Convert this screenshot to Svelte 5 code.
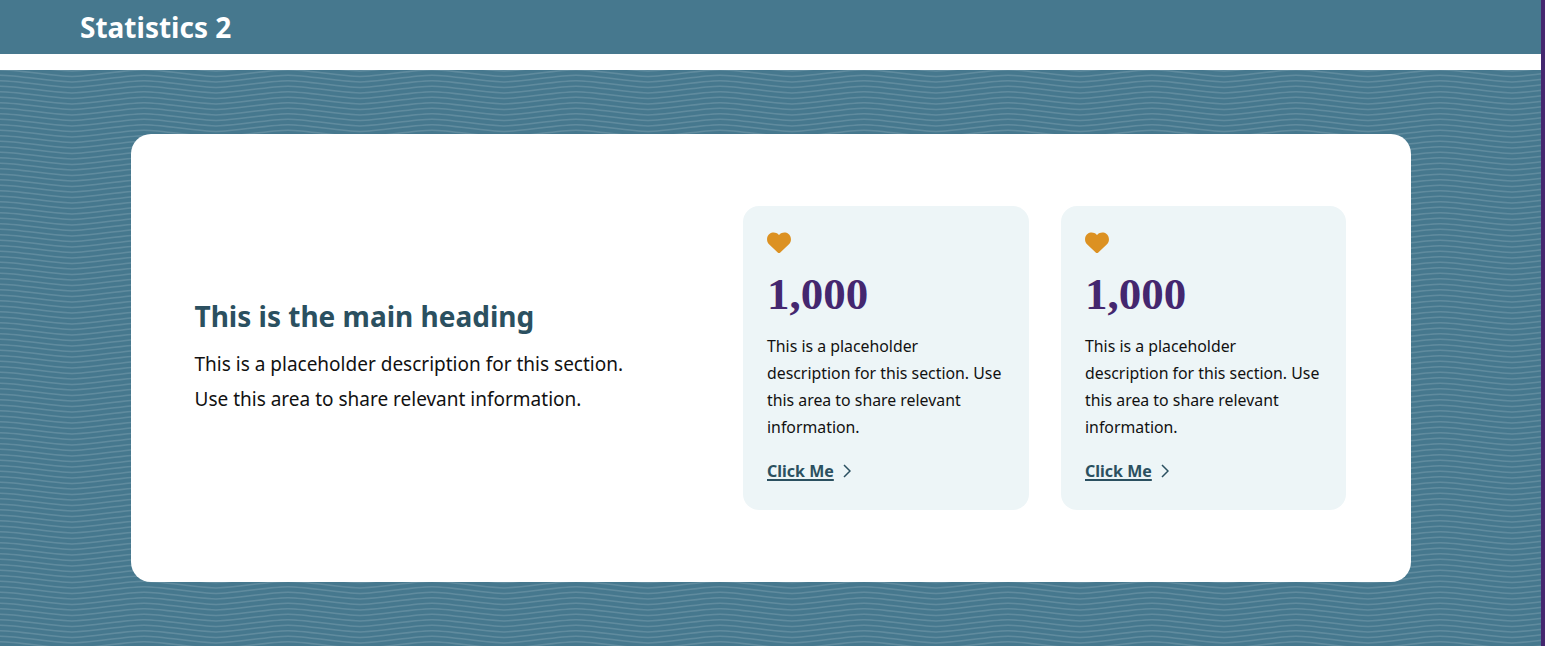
<script>
  const cards = [1, 2];
</script>

<div class="page">
  <header class="topbar"><h1>Statistics 2</h1></header>
  <section class="band">
    <div class="panel">
      <div class="intro">
        <h2>This is the main heading</h2>
        <p>This is a placeholder description for this section. Use this area to share relevant information.</p>
      </div>
      <div class="cards">
        {#each cards as card}
          <article class="card">
            <svg class="heart" viewBox="0 32 512 450" aria-hidden="true">
              <path d="M47.600 300.400L228.300 469.900c7.500 7 17.400 10.900 27.700 10.900s20.200-3.900 27.700-10.900L464.400 300.400c30.400-28.300 47.600-68 47.600-109.500v-5.800c0-69.900-50.500-129.500-119.400-141C347 36.500 300.600 51.400 268 84L256 96 244 84c-32.600-32.600-79-47.500-124.600-39.900C50.500 55.600 0 115.200 0 185.100v5.800c0 41.500 17.200 81.200 47.600 109.500z" />
            </svg>
            <div class="num">1,000</div>
            <p>This is a placeholder description for this section. Use this area to share relevant information.</p>
            <a href="#top" class="link">
              <span>Click Me</span>
              <svg class="chev" viewBox="0 0 8 14" aria-hidden="true"><path d="M1 1l6 6-6 6" /></svg>
            </a>
          </article>
        {/each}
      </div>
    </div>
  </section>
</div>

<style>
  :global(body) {
    margin: 0;
    background: #fff;
    overflow: hidden;
  }
  .page {
    height: 646px;
    border-right: 4px solid #44276f;
    font-family: "Noto Sans", "Open Sans", sans-serif;
    overflow: hidden;
  }
  .topbar {
    height: 54px;
    background: #46788e;
    margin-bottom: 16px;
    padding-left: 80px;
    display: flex;
    align-items: center;
  }
  h1 {
    margin: 0;
    color: #fff;
    font-size: 28px;
    font-weight: 700;
  }
  .band {
    height: 576px;
    box-sizing: border-box;
    padding: 64px 130px 0 131px;
    background-color: #46788e;
    background-image: url("data:image/svg+xml,%3Csvg xmlns='http://www.w3.org/2000/svg' width='144' height='11'%3E%3Cdefs%3E%3Cpath id='w' d='M-36 3C0-1.500 0-1.500 36 3S72 7.500 108 3S144-1.500 180 3' fill='none' stroke='%23fff' stroke-opacity='.14' stroke-width='1.500'/%3E%3C/defs%3E%3Cuse href='%23w' y='-11'/%3E%3Cuse href='%23w' y='-5.500'/%3E%3Cuse href='%23w'/%3E%3Cuse href='%23w' y='5.500'/%3E%3Cuse href='%23w' y='11'/%3E%3C/svg%3E");
  }
  .panel {
    height: 448px;
    box-sizing: border-box;
    background: #fff;
    border-radius: 20px;
    padding: 72px 65px 72px 64px;
    display: flex;
    align-items: stretch;
  }
  .intro {
    width: 440px;
    margin-right: 108px;
    align-self: center;
    margin-top: -2px;
    transform: translateX(-0.5px);
  }
  h2 {
    margin: 0 0 12px;
    color: #2b5060;
    font-size: 28px;
    line-height: 38px;
    font-weight: 700;
  }
  .intro p {
    margin: 0;
    font-size: 19px;
    line-height: 35px;
    color: #111;
  }
  .cards {
    display: flex;
    gap: 32px;
  }
  .card {
    width: 286px;
    height: 304px;
    box-sizing: border-box;
    background: #edf5f7;
    border-radius: 16px;
    padding: 26px 24px 0;
  }
  .card:last-child {
    width: 285px;
  }
  .heart {
    display: block;
    width: 24px;
    height: 21px;
    fill: #dc9122;
  }
  .num {
    margin-top: 13px;
    font-family: "Liberation Serif", serif;
    font-weight: 700;
    font-size: 45px;
    line-height: 56px;
    color: #44276f;
  }
  .card p {
    margin: 11px 0 0;
    font-size: 15.850px;
    line-height: 27px;
    color: #111;
  }
  .link {
    display: flex;
    align-items: center;
    gap: 9px;
    margin-top: 19px;
    color: #2b5060;
    font-size: 16px;
    font-weight: 700;
    text-decoration: none;
  }
  .link span {
    text-decoration: underline;
    text-decoration-thickness: 2px;
    text-underline-offset: 2px;
  }
  .chev {
    width: 8px;
    height: 14px;
    fill: none;
    stroke: #2b5060;
    stroke-width: 1.500;
  }
</style>
